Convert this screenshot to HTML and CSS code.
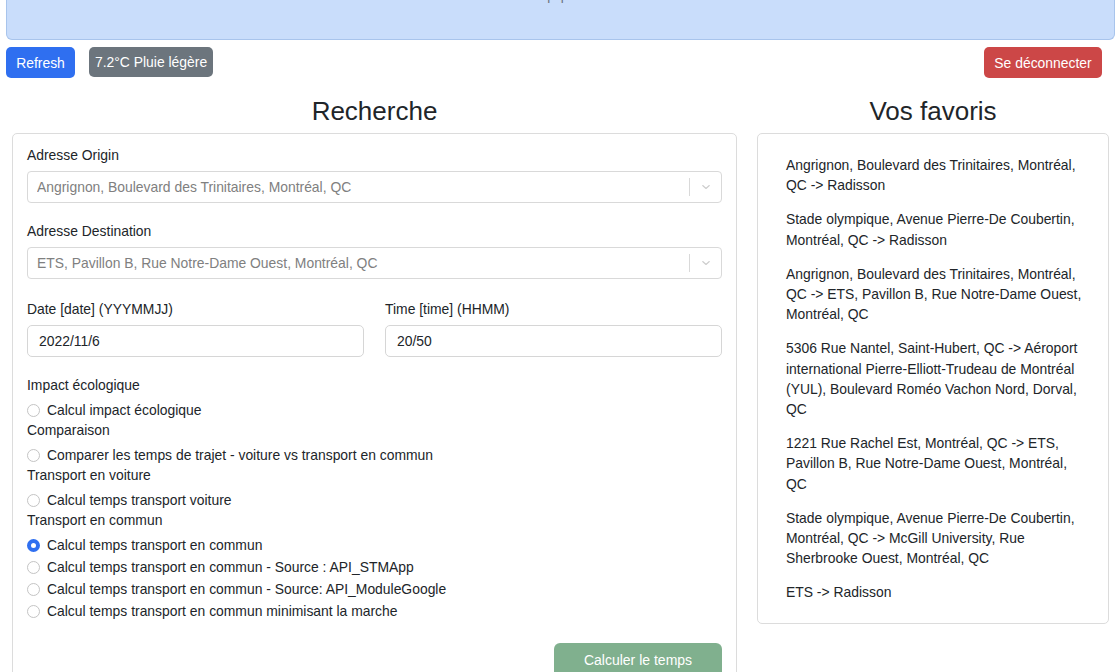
FILE: index.html
```html
<!DOCTYPE html>
<html lang="fr">
<head>
<meta charset="utf-8">
<title>Recherche</title>
<link rel="stylesheet" href="styles.css">
</head>
<body>
<div class="page">
  <div class="banner"><span class="banner-text">Équipe 5</span></div>
  <div class="toolbar">
    <div class="toolbar-left">
      <button class="btn btn-primary">Refresh</button>
      <button class="btn btn-secondary">7.2°C Pluie légère</button>
    </div>
    <button class="btn btn-danger">Se déconnecter</button>
  </div>
  <div class="columns">
    <section class="col">
      <h2 class="col-title">Recherche</h2>
      <div class="card card-form">
        <div class="field">
          <label class="field-label">Adresse Origin</label>
          <div class="select">
            <span class="select-value">Angrignon, Boulevard des Trinitaires, Montréal, QC</span>
            <span class="select-sep"></span>
            <span class="select-arrow"><svg width="12" height="12" viewBox="0 0 20 20"><path d="M4.5 7.5 L10 12.5 L15.5 7.5" fill="none" stroke="#cccccc" stroke-width="1.8" stroke-linecap="round" stroke-linejoin="round"/></svg></span>
          </div>
        </div>
        <div class="field">
          <label class="field-label">Adresse Destination</label>
          <div class="select">
            <span class="select-value">ETS, Pavillon B, Rue Notre-Dame Ouest, Montréal, QC</span>
            <span class="select-sep"></span>
            <span class="select-arrow"><svg width="12" height="12" viewBox="0 0 20 20"><path d="M4.5 7.5 L10 12.5 L15.5 7.5" fill="none" stroke="#cccccc" stroke-width="1.8" stroke-linecap="round" stroke-linejoin="round"/></svg></span>
          </div>
        </div>
        <div class="field-row">
          <div class="field">
            <label class="field-label">Date [date] (YYYMMJJ)</label>
            <div class="input">2022/11/6</div>
          </div>
          <div class="field">
            <label class="field-label">Time [time] (HHMM)</label>
            <div class="input">20/50</div>
          </div>
        </div>
        <div class="groups">
          <div class="group-label">Impact écologique</div>
          <div class="check"><span class="radio"></span>Calcul impact écologique</div>
          <div class="group-label">Comparaison</div>
          <div class="check"><span class="radio"></span>Comparer les temps de trajet - voiture vs transport en commun</div>
          <div class="group-label">Transport en voiture</div>
          <div class="check"><span class="radio"></span>Calcul temps transport voiture</div>
          <div class="group-label">Transport en commun</div>
          <div class="check"><span class="radio radio-on"></span>Calcul temps transport en commun</div>
          <div class="check"><span class="radio"></span>Calcul temps transport en commun - Source : API_STMApp</div>
          <div class="check"><span class="radio"></span>Calcul temps transport en commun - Source: API_ModuleGoogle</div>
          <div class="check"><span class="radio"></span>Calcul temps transport en commun minimisant la marche</div>
        </div>
        <div class="actions">
          <button class="btn btn-success">Calculer le temps</button>
        </div>
      </div>
    </section>
    <section class="col">
      <h2 class="col-title">Vos favoris</h2>
      <div class="card card-fav">
        <p class="fav">Angrignon, Boulevard des Trinitaires, Montréal, QC -&gt; Radisson</p>
        <p class="fav">Stade olympique, Avenue Pierre-De Coubertin, Montréal, QC -&gt; Radisson</p>
        <p class="fav">Angrignon, Boulevard des Trinitaires, Montréal, QC -&gt; ETS, Pavillon B, Rue Notre-Dame Ouest, Montréal, QC</p>
        <p class="fav">5306 Rue Nantel, Saint-Hubert, QC -&gt; Aéroport international Pierre-Elliott-Trudeau de Montréal (YUL), Boulevard Roméo Vachon Nord, Dorval, QC</p>
        <p class="fav">1221 Rue Rachel Est, Montréal, QC -&gt; ETS, Pavillon B, Rue Notre-Dame Ouest, Montréal, QC</p>
        <p class="fav">Stade olympique, Avenue Pierre-De Coubertin, Montréal, QC -&gt; McGill University, Rue Sherbrooke Ouest, Montréal, QC</p>
        <p class="fav">ETS -&gt; Radisson</p>
      </div>
    </section>
  </div>
</div>
</body>
</html>
```
FILE: styles.css
```css
* { box-sizing: border-box; }
html, body { margin: 0; padding: 0; background: #ffffff; }
body {
  font-family: "Liberation Sans", Arial, sans-serif;
  font-size: 13.9px;
  color: #212529;
  overflow: hidden;
  height: 672px;
}
.page { padding: 0 4px 0 6px; }
.banner {
  height: 40px;
  background: #c9ddfb;
  border: 1px solid #a8c4ec;
  border-top: none;
  border-radius: 0 0 6px 6px;
  display: flex;
  justify-content: center;
  align-items: flex-start;
  overflow: hidden;
}
.banner-text {
  margin-top: -12px;
  font-size: 13.5px;
  line-height: 16px;
  color: #6b7480;
}
.toolbar {
  display: flex;
  justify-content: space-between;
  align-items: flex-start;
  margin-top: 7px;
  padding-right: 13px;
}
.toolbar-left { display: flex; gap: 14px; }
.btn {
  font-family: inherit;
  font-size: 13.9px;
  border: none;
  border-radius: 5px;
  color: #ffffff;
  height: 31px;
  padding: 0 10px;
  white-space: nowrap;
  cursor: pointer;
}
.btn-primary { background: #2f6ff0; min-width: 69px; }
.btn-secondary { background: #6c757d; width: 124px; height: 30px; padding: 0 6px; }
.btn-danger { background: #cc4747; min-width: 118px; }
.btn-success { background: #80b08e; height: 34px; width: 168px; font-size: 14px; border-radius: 6px; }
.columns {
  display: grid;
  grid-template-columns: 725px 352px;
  column-gap: 20px;
  margin-left: 6px;
  margin-top: 17px;
}
.col-title {
  margin: 0 0 8px 0;
  text-align: center;
  font-size: 26px;
  font-weight: 500;
  line-height: 30px;
  color: #212529;
  position: relative;
  top: 1px;
}
.card {
  border: 1px solid #dcdcdc;
  border-radius: 5px;
  background: #fff;
}
.card-form { padding: 11px 14px 0 14px; height: 560px; }
.field { display: flex; flex-direction: column; }
.field-label { line-height: 20px; margin-bottom: 6px; }
.field + .field { margin-top: 18px; }
.select {
  height: 32px;
  border: 1px solid #d9d9d9;
  border-radius: 4px;
  display: flex;
  align-items: center;
  padding-left: 9px;
}
.select-value { flex: 1; color: #808080; white-space: nowrap; overflow: hidden; }
.select-sep { width: 1px; height: 18px; background: #d9d9d9; }
.select-arrow { width: 31px; display: flex; justify-content: center; align-items: center; }
.field-row {
  display: grid;
  grid-template-columns: 1fr 1fr;
  column-gap: 21px;
  margin-top: 20px;
}
.field-row .field + .field { margin-top: 0; }
.input {
  height: 32px;
  border: 1px solid #d6d6d6;
  border-radius: 5px;
  padding-left: 11px;
  display: flex;
  align-items: center;
  color: #212529;
}
.groups { margin-top: 18px; }
.group-label { line-height: 20px; margin-bottom: 4px; }
.check + .group-label { margin-top: -1px; }
.check {
  height: 22px;
  display: flex;
  align-items: center;
  gap: 7px;
}
.radio {
  width: 13px;
  height: 13px;
  border: 1px solid #c4c4c4;
  border-radius: 50%;
  background: #fff;
  flex: none;
}
.radio-on {
  border: 4px solid #2f6ff0;
  background: #fff;
}
.actions {
  display: flex;
  justify-content: flex-end;
  margin-top: 21px;
}
.card-fav { padding: 21px 22px 6px 28px; }
.fav { margin: 0 0 14px 0; line-height: 20.2px; }
```
